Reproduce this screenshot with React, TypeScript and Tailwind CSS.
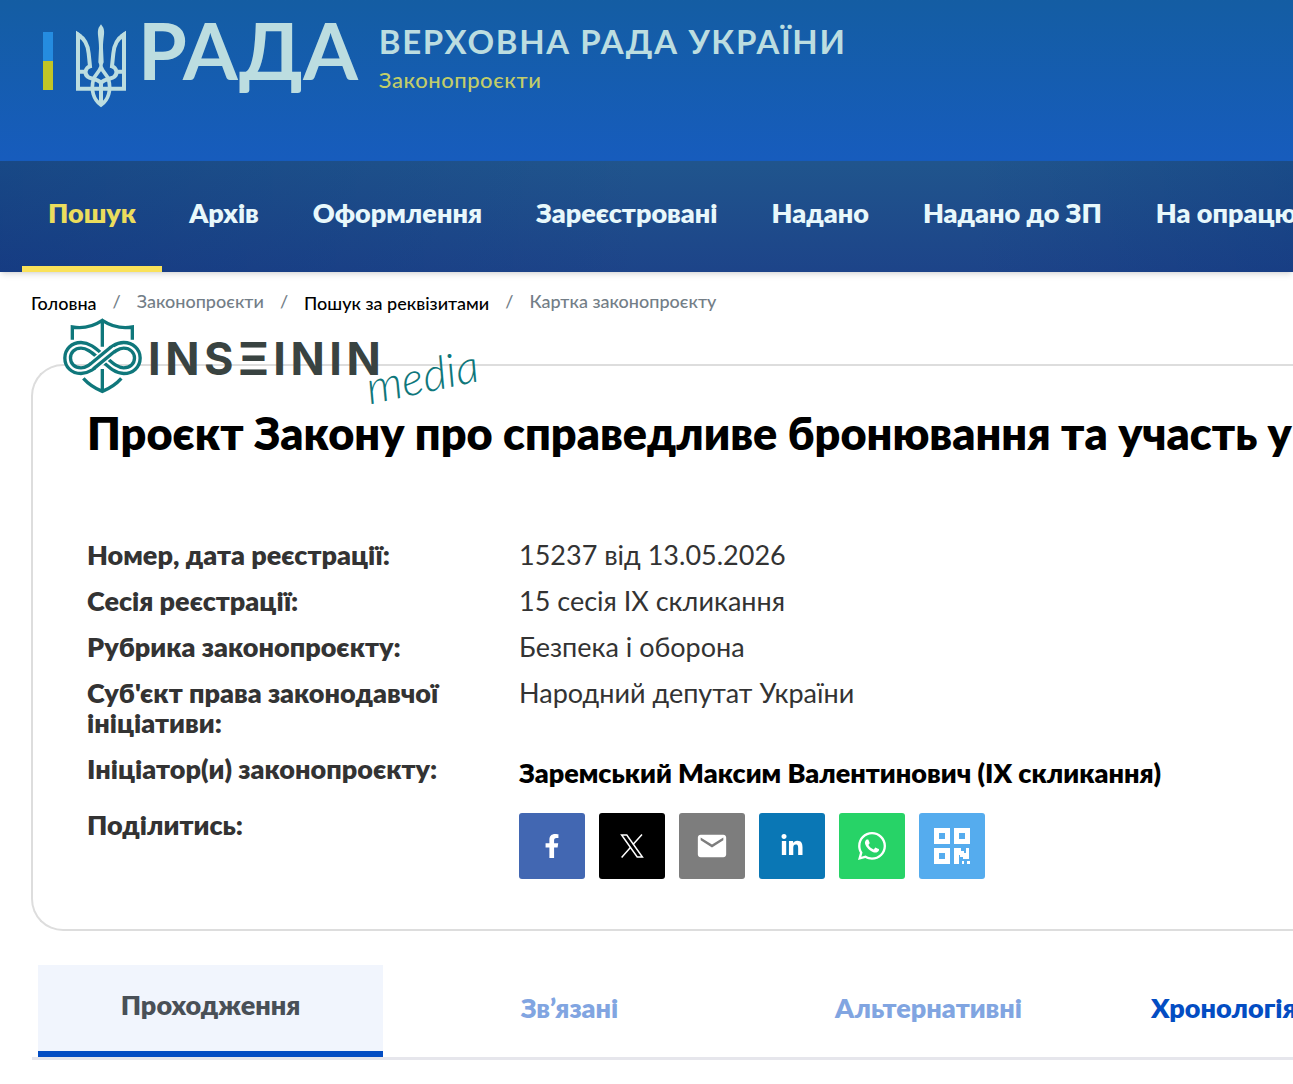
import { FaFacebookF, FaLinkedinIn, FaWhatsapp } from 'react-icons/fa';
import { MdEmail } from 'react-icons/md';

const navItems = ['Пошук', 'Архів', 'Оформлення', 'Зареєстровані', 'Надано', 'Надано до ЗП', 'На опрацюванні'];

const details = [
  { label: 'Номер, дата реєстрації:', value: '15237 від 13.05.2026' },
  { label: 'Сесія реєстрації:', value: '15 сесія IX скликання' },
  { label: 'Рубрика законопроєкту:', value: 'Безпека і оборона' },
  { label: "Суб'єкт права законодавчої ініціативи:", value: 'Народний депутат України' },
];

const shareButtons = [
  { name: 'Facebook', className: 'bg-[#4267b2]', icon: <FaFacebookF className="w-6 h-6" /> },
  { name: 'X', className: 'bg-black', icon: <XIcon /> },
  { name: 'Email', className: 'bg-[#7d7d7d]', icon: <MdEmail className="w-[34px] h-[34px]" /> },
  { name: 'LinkedIn', className: 'bg-[#0a77b5]', icon: <FaLinkedinIn className="w-6 h-6" /> },
  { name: 'WhatsApp', className: 'bg-[#27d367]', icon: <FaWhatsapp className="w-8 h-8" /> },
  { name: 'QR', className: 'bg-[#55acee]', icon: <QrIcon /> },
];

function XIcon() {
  return (
    <svg viewBox="0 0 24 24" className="w-6 h-6" fill="none" stroke="currentColor" strokeWidth="1.5">
      <path d="M1.6 1h5.2l15.6 22h-5.2z" />
      <path d="M22 0.5 13 10.6M10.4 13.6 1.6 23.5" />
    </svg>
  );
}

function QrIcon() {
  return (
    <svg viewBox="0 0 36 36" className="w-9 h-9" fill="currentColor">
      <path fillRule="evenodd" d="M0 0h16v16H0zM5 5v6h6V5zM20 0h16v16H20zM25 5v6h6V5zM0 20h16v16H0zM5 25v6h6v-6z" />
      <path d="M20 20h7v3h3v2h2v-5h3v11h-6v-2h-3v-2h-1v9h-5zM28 33h2v3h-2zM33 33h3v3h-3z" />
    </svg>
  );
}

function Trident() {
  return (
    <svg viewBox="168 72 150 252" className="w-[50px] h-[84px] shrink-0" fill="none" stroke="#bcdde0" strokeWidth="12">
      <path d="M174 266V103C193 115 204 136 206 160L210 199C196 203 192 221 203 230C212 238 231 235 243 249" />
      <path d="M312 266V103C293 115 282 136 280 160L276 199C290 203 294 221 283 230C274 238 255 235 243 249" />
      <path d="M168 266H318M174 215H193M293 215H312M243 245V310" />
      <path d="M243 200C239 214 226 224 221 236C211 270 221 300 243 315C265 300 275 270 265 236C260 224 247 214 243 200Z" strokeWidth="11" />
      <path d="M243 73L250 83C256 99 249 111 249 145L251 187L243 207L235 187L237 145C237 111 230 99 236 83Z" fill="#bcdde0" stroke="none" />
      <path d="M168 93L185 104V120L168 110ZM318 93L301 104V120L318 110Z" fill="#bcdde0" stroke="none" />
    </svg>
  );
}

function ShieldMark() {
  return (
    <svg viewBox="38 26 237 228" className="w-[79px] h-[76px] shrink-0" fill="none" stroke="#0f777b" strokeWidth="10">
      <path d="M66 91V53C105 60 132 49 156 33C180 49 207 60 246 53V91M156 34V112M156 179V246M99 207C117 227 136 238 156 246C176 238 195 227 213 207" />
      <g strokeWidth="27">
        <path d="M156 145C130 123 114 108 92 108C68 108 52 125 52 146C52 168 68 184 92 184C116 184 135 164 156 147" />
        <path d="M156 145C182 168 198 184 220 184C244 184 261 168 261 146C261 125 244 108 220 108C196 108 178 128 156 147" />
      </g>
      <path d="M156 145C130 123 114 108 92 108C68 108 52 125 52 146C52 168 68 184 92 184C116 184 135 164 156 147" stroke="#fff" strokeWidth="7" />
      <path d="M156 145C182 168 198 184 220 184C244 184 261 168 261 146C261 125 244 108 220 108C196 108 178 128 156 147" stroke="#fff" strokeWidth="7" />
      <path d="M128 169L184 122" stroke="#fff" strokeWidth="36" />
      <path d="M124 172L188 119" strokeWidth="27" />
      <path d="M120 175L192 116" stroke="#fff" strokeWidth="7" />
    </svg>
  );
}

function Watermark() {
  return (
    <div className="absolute left-[63px] top-[46px] z-10 flex items-center">
      <ShieldMark />
      <span className="ml-[6px] pt-1 font-['Inter',sans-serif] text-[45px] leading-none font-bold tracking-widest text-[#394341]">INSΞININ</span>
      <span className="absolute left-[302px] top-[42px] -rotate-12 text-[46px] leading-8 font-light italic text-[#0f777b]">media</span>
    </div>
  );
}

function Header() {
  return (
    <header>
      <div className="flex h-[161px] bg-linear-to-b from-[#145da3] to-[#175cbd] pl-[43px] text-[#bcdde0]">
        <div className="mt-8 h-[58px] w-[10px] shrink-0 bg-linear-to-b from-[#258ce0] from-50% to-[#c1c526] to-50%" />
        <div className="ml-[23px] mt-6">
          <Trident />
        </div>
        <div className="ml-3 mt-2 text-[79px] leading-[84px] font-bold">РАДА</div>
        <div className="ml-[21px] mt-5">
          <div className="whitespace-nowrap text-[33px] leading-[42px] font-bold tracking-wider">ВЕРХОВНА РАДА УКРАЇНИ</div>
          <div className="text-[22px] leading-9 font-medium tracking-wide text-[#c2cd69]">Законопроєкти</div>
        </div>
      </div>
      <nav className="flex h-[111px] overflow-hidden bg-[linear-gradient(90deg,#00237040,#00237000_50%,#00237000_75%,#00237030),linear-gradient(#20558d,#1d4489)] pl-[22px] shadow-md">
        {navItems.map((item, i) => (
          <a
            key={item}
            href="#"
            className={
              i === 0
                ? 'border-b-[6px] border-[#fae25a] px-[26px] pt-8 text-[27px] leading-10 font-extrabold text-[#ebdd5d]'
                : 'whitespace-nowrap px-[27px] pt-8 text-[27px] leading-10 font-extrabold text-[#e8f8fb]'
            }
          >
            {item}
          </a>
        ))}
      </nav>
    </header>
  );
}

function Breadcrumbs() {
  return (
    <nav className="flex h-[92px] gap-4 pl-[31px] pt-[15px] text-[18px] leading-7 font-medium text-[#737e87]">
      <a href="#" className="text-black pt-[2px]">Головна</a>
      <span>/</span>
      <span>Законопроєкти</span>
      <span>/</span>
      <a href="#" className="text-black pt-[2px]">Пошук за реквізитами</a>
      <span>/</span>
      <span>Картка законопроєкту</span>
    </nav>
  );
}

function BillCard() {
  return (
    <section className="ml-[31px] rounded-l-[32px] border-2 border-r-0 border-[#dddddd] pl-[54px] pt-[38px] pb-[50px]">
      <h1 className="whitespace-nowrap text-[45px] leading-[58px] font-extrabold text-black">
        Проєкт Закону про справедливе бронювання та участь у
      </h1>
      <dl className="mt-[78px] grid grid-cols-[400px_1fr] gap-x-8 gap-y-4 text-[27px] leading-[30px] text-[#333333]">
        {details.map((row) => (
          <div key={row.label} className="contents">
            <dt className="font-extrabold">{row.label}</dt>
            <dd>{row.value}</dd>
          </div>
        ))}
        <dt className="font-extrabold">Ініціатор(и) законопроєкту:</dt>
        <dd className="pt-1 pb-[6px]">
          <a href="#" className="font-extrabold text-black">Заремський Максим Валентинович (IX скликання)</a>
        </dd>
        <dt className="font-extrabold">Поділитись:</dt>
        <dd className="flex gap-[14px] pt-[3px]">
          {shareButtons.map((button) => (
            <button
              key={button.name}
              aria-label={button.name}
              className={`flex size-[66px] items-center justify-center rounded-[3px] text-white ${button.className}`}
            >
              {button.icon}
            </button>
          ))}
        </dd>
      </dl>
    </section>
  );
}

function Tabs() {
  return (
    <div className="ml-8 mt-[34px] flex gap-[14px] border-b-[3px] border-[#e6e6ec] pl-[6px] text-[27px] leading-10 font-extrabold">
      <button className="h-[92px] w-[345px] shrink-0 border-b-[6px] border-[#034dc3] bg-[#f1f5fd] pb-[6px] text-[#495057]">Проходження</button>
      <button className="h-[92px] w-[345px] shrink-0 pb-[6px] text-[#81a5e1]">Зв’язані</button>
      <button className="h-[92px] w-[345px] shrink-0 pb-[6px] text-[#81a5e1]">Альтернативні</button>
      <button className="h-[92px] shrink-0 pl-9 pb-[6px] text-[#034dc3]">Хронологія</button>
    </div>
  );
}

export default function App() {
  return (
    <div className="min-h-screen overflow-hidden bg-white pb-6 font-['Lato','Open_Sans',sans-serif]">
      <Header />
      <main className="relative">
        <Watermark />
        <Breadcrumbs />
        <BillCard />
        <Tabs />
      </main>
    </div>
  );
}
